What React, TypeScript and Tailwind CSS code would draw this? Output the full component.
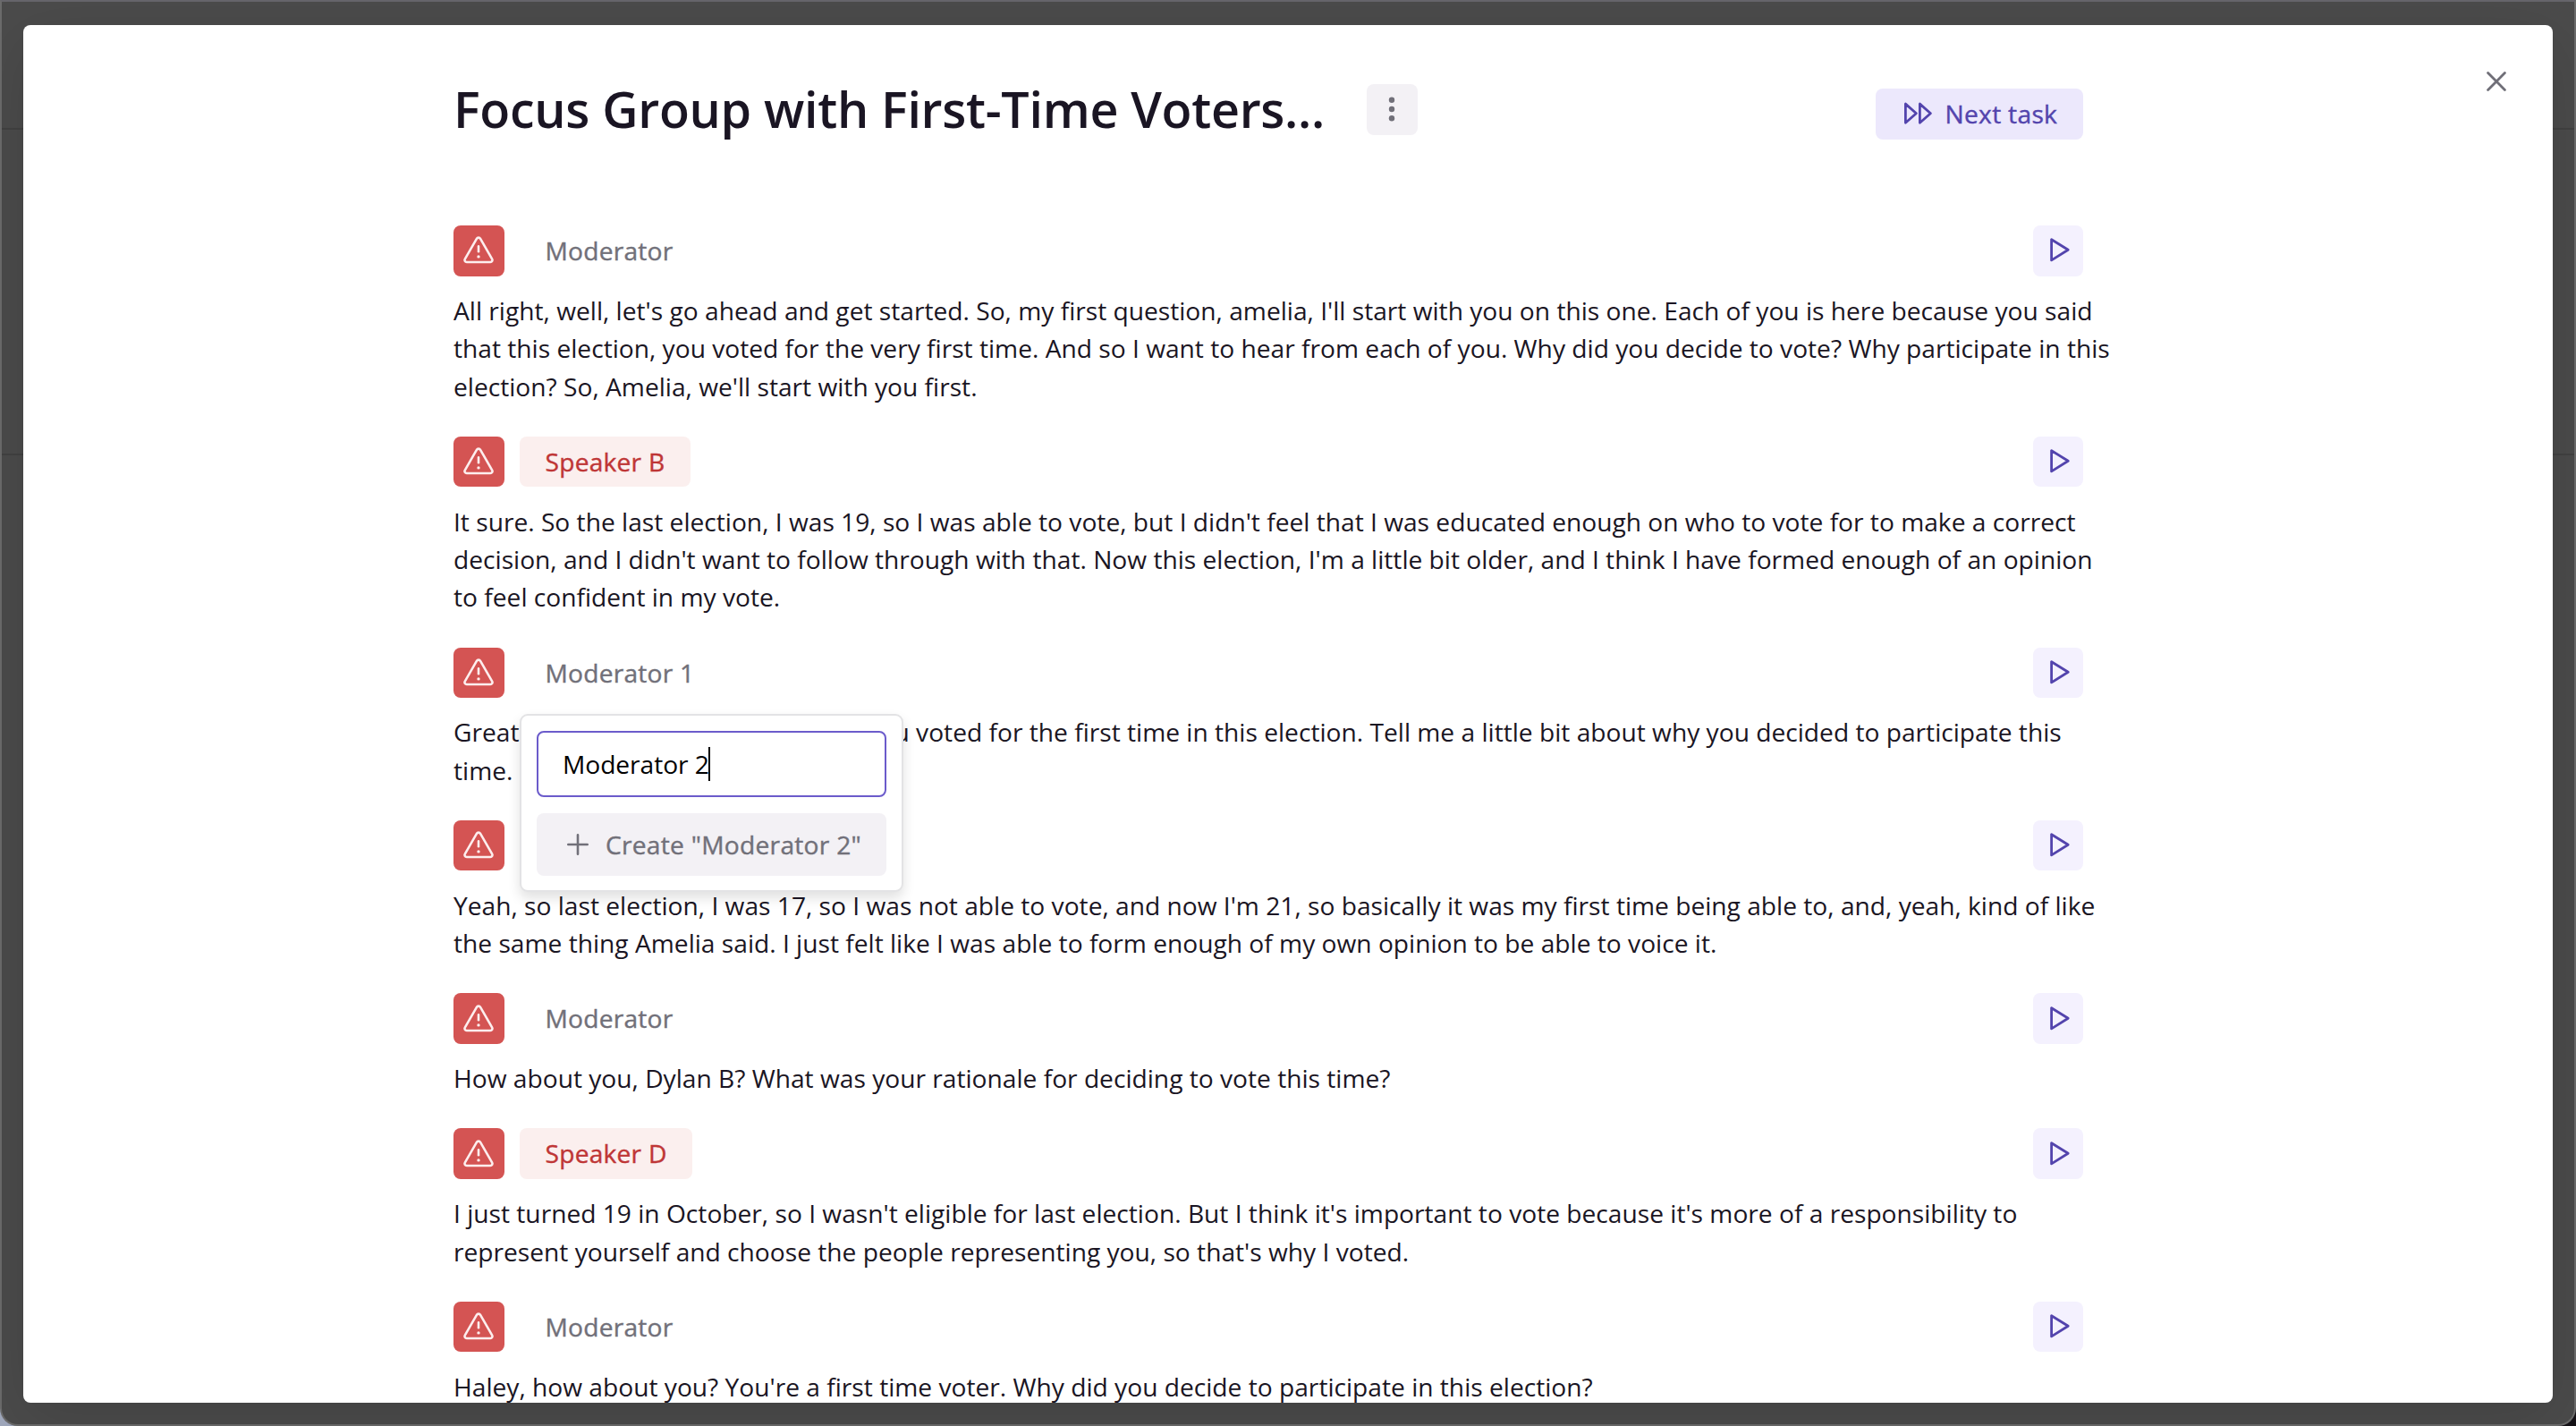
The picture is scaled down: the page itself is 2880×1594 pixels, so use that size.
import React from "react";

type Tone = "known" | "unknown";

type Turn = {
  speaker?: string;
  tone: Tone;
  text: React.ReactNode;
  editing?: boolean;
};

const TURNS: Turn[] = [
  {
    speaker: "Moderator",
    tone: "known",
    text: "All right, well, let's go ahead and get started. So, my first question, amelia, I'll start with you on this one. Each of you is here because you said that this election, you voted for the very first time. And so I want to hear from each of you. Why did you decide to vote? Why participate in this election? So, Amelia, we'll start with you first.",
  },
  {
    speaker: "Speaker B",
    tone: "unknown",
    text: "It sure. So the last election, I was 19, so I was able to vote, but I didn't feel that I was educated enough on who to vote for to make a correct decision, and I didn't want to follow through with that. Now this election, I'm a little bit older, and I think I have formed enough of an opinion to feel confident in my vote.",
  },
  {
    speaker: "Moderator 1",
    tone: "known",
    // the rename popover sits over the gap
    text: (
      <>
        Great
        <span className="inline-block w-[388px]" />
        you voted for the first time in this election. Tell me a little bit about why you decided to participate this
        time.
      </>
    ),
    editing: true,
  },
  {
    tone: "unknown",
    text: "Yeah, so last election, I was 17, so I was not able to vote, and now I'm 21, so basically it was my first time being able to, and, yeah, kind of like the same thing Amelia said. I just felt like I was able to form enough of my own opinion to be able to voice it.",
  },
  {
    speaker: "Moderator",
    tone: "known",
    text: "How about you, Dylan B? What was your rationale for deciding to vote this time?",
  },
  {
    speaker: "Speaker D",
    tone: "unknown",
    text: "I just turned 19 in October, so I wasn't eligible for last election. But I think it's important to vote because it's more of a responsibility to represent yourself and choose the people representing you, so that's why I voted.",
  },
  {
    speaker: "Moderator",
    tone: "known",
    text: "Haley, how about you? You're a first time voter. Why did you decide to participate in this election?",
  },
];

function WarningIcon() {
  return (
    <svg width="36" height="36" viewBox="0 0 36 36" fill="none" aria-hidden="true">
      <path
        d="M15.9 4.8L2.8 27.6C1.9 29.2 3 31 4.8 31H31.2C33 31 34.1 29.2 33.2 27.6L20.1 4.8C19.2 3.2 16.8 3.2 15.9 4.8Z"
        stroke="currentColor"
        strokeWidth="2.6"
        strokeLinejoin="round"
      />
      <path d="M18 13.4V19.2" stroke="currentColor" strokeWidth="2.6" strokeLinecap="round" />
      <circle cx="18" cy="24.9" r="1.7" fill="currentColor" />
    </svg>
  );
}

function PlayIcon() {
  return (
    <svg width="36" height="36" viewBox="0 0 36 36" fill="none" aria-hidden="true">
      <path d="M10.6 5.7V28.9L29.2 17.3Z" stroke="currentColor" strokeWidth="2.8" strokeLinejoin="round" />
    </svg>
  );
}

function RenamePopover() {
  return (
    <div className="absolute left-[74px] top-[74.5px] z-10 flex h-[199px] w-[429px] flex-col gap-[18px] rounded-[9px] border-2 border-[#e3e3e5] bg-white p-[17px] shadow-[0_7px_14px_rgba(0,0,0,0.12)]">
      <div className="flex h-[74px] shrink-0 items-center rounded-[8px] border-2 border-[#6b5bcb] px-[27px] text-black">
        <span className="tracking-[-0.05px]">Moderator 2</span>
        <span className="-ml-[1px] h-[38px] w-[2px] bg-black" />
      </div>
      <button
        type="button"
        className="flex h-[70px] shrink-0 items-center whitespace-nowrap rounded-[8px] bg-[#f3f1f5] pl-[34px] text-[#717079]"
      >
        <svg width="24" height="24" viewBox="0 0 24 24" fill="none" aria-hidden="true">
          <path d="M12 1.3V22.7M1.3 12H22.7" stroke="currentColor" strokeWidth="2.6" strokeLinecap="round" />
        </svg>
        <span className="ml-[19px] tracking-[0.27px] [-webkit-text-stroke:0.4px]">Create "Moderator 2"</span>
      </button>
    </div>
  );
}

function TurnRow({ turn }: { turn: Turn }) {
  return (
    <article className="relative">
      <div className="flex h-[56.5px] w-[1822px] items-center">
        <button
          type="button"
          aria-label="Flag"
          className="flex size-[56.5px] items-center justify-center rounded-[8px] bg-[#d45453] text-[#fdeeee]"
        >
          <WarningIcon />
        </button>
        {turn.speaker && (
          <span
            className={[
              "ml-[17.5px] flex h-full items-center rounded-[8px] px-[28.5px] tracking-[0.23px] [-webkit-text-stroke:0.4px]",
              turn.tone === "unknown" ? "bg-[#fbefee] text-[#bf3636]" : "text-[#717079]",
            ].join(" ")}
          >
            {turn.speaker}
          </span>
        )}
        <button
          type="button"
          aria-label="Play"
          className="ml-auto flex size-[56.5px] items-center justify-center rounded-[8px] bg-[#f4f1fe] text-[#5344ad]"
        >
          <PlayIcon />
        </button>
      </div>
      <p className="mt-[17.4px]">{turn.text}</p>
      {turn.editing && <RenamePopover />}
    </article>
  );
}

export default function App() {
  return (
    <div className="h-[1594px] w-[2880px] overflow-hidden bg-[linear-gradient(90deg,#a0a8bd_0_50%,#151217_50%)] font-['Open_Sans',sans-serif] text-[28.17px] leading-[42.375px] text-[#1a1523]">
      <div className="relative flex h-full w-full flex-col rounded-b-[20px] border-2 border-[#6b6b6b] border-t-[#66656b] bg-[#4b4b4b]">
        {/* page rules showing through the overlay */}
        <div className="mt-[141px] h-[2px] bg-[#414141]" />
        <div className="mt-[362px] h-[2px] bg-[#414141]" />

        <main className="absolute left-[24px] top-[26px] h-[1540px] w-[2828px] overflow-hidden rounded-[8px] bg-white shadow-[0_18px_68px_rgba(0,0,0,0.13)]">
          <button type="button" aria-label="Close" className="absolute left-[2752.5px] top-[51px] text-[#6f6e77]">
            <svg width="24" height="24" viewBox="0 0 24 24" fill="none" aria-hidden="true">
              <path d="M2.6 2.6L21.4 21.4M21.4 2.6L2.6 21.4" stroke="currentColor" strokeWidth="2.8" strokeLinecap="round" />
            </svg>
          </button>

          <div className="ml-[481px] w-[1860px] pt-[66px]">
            <header className="flex h-[158px] w-[1822px] items-start">
              <h1 className="w-[973px] whitespace-nowrap text-[55.6px] font-semibold leading-[55px] tracking-[-0.3px]">
                Focus Group with First-Time Voters...
              </h1>
              <button
                type="button"
                aria-label="More"
                className="ml-[48px] flex size-[56.5px] items-center justify-center rounded-[8px] bg-[#f3f1f5] text-[#717079]"
              >
                <svg width="8" height="28" viewBox="0 0 8 28" fill="currentColor" aria-hidden="true">
                  <circle cx="4" cy="3.8" r="3.2" />
                  <circle cx="4" cy="14" r="3.2" />
                  <circle cx="4" cy="24.2" r="3.2" />
                </svg>
              </button>
              <button
                type="button"
                className="ml-auto mt-[5px] flex h-[56.5px] w-[232px] items-center whitespace-nowrap rounded-[8px] bg-[#ece8fc] pl-[31px] text-[#5344ad]"
              >
                <svg width="34" height="28" viewBox="0 0 34 28" fill="none" aria-hidden="true">
                  <path
                    d="M2.4 3.1V24.3L14.4 13.7ZM18.4 3.1V24.3L30.4 13.7Z"
                    stroke="currentColor"
                    strokeWidth="2.8"
                    strokeLinejoin="round"
                  />
                </svg>
                <span className="ml-[12.5px] tracking-[0.3px] [-webkit-text-stroke:0.4px]">Next task</span>
              </button>
            </header>

            <section className="flex flex-col gap-[34.75px]">
              {TURNS.map((turn, i) => (
                <TurnRow key={i} turn={turn} />
              ))}
            </section>
          </div>
        </main>
      </div>
    </div>
  );
}
